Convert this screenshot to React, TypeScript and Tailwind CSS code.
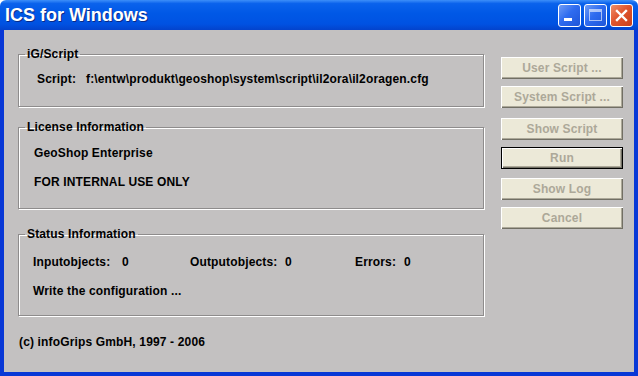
const groupCls =
  "m-0 border border-[#8e8c8c] p-0 shadow-[inset_1px_1px_0_#ffffff,1px_1px_0_#ffffff]";
const legendCls = "ml-[6px] px-[2px] leading-[14px] text-black";

function TitleButton({ kind }: { kind: "min" | "max" | "close" }) {
  const isClose = kind === "close";
  return (
    <div
      className={
        "flex h-[23px] w-[23px] items-center justify-center rounded-[3px] border border-white " +
        (isClose
          ? "bg-[linear-gradient(135deg,#f0906a_0%,#e0552e_45%,#c8401c_100%)]"
          : "bg-[linear-gradient(135deg,#6f9cf5_0%,#2f6cf0_45%,#1e55d8_100%)]")
      }
    >
      {kind === "min" && <div className="mt-[9px] ml-[-4px] h-[3px] w-[8px] bg-white" />}
      {kind === "max" && (
        <div className="h-[12px] w-[13px] border border-white border-t-[3px] opacity-60" />
      )}
      {isClose && (
        <svg width="13" height="13" viewBox="0 0 13 13">
          <path d="M2 2 L11 11 M11 2 L2 11" stroke="#fff" strokeWidth="2.4" strokeLinecap="square" />
        </svg>
      )}
    </div>
  );
}

function Btn({ label, def, className }: { label: string; def?: boolean; className?: string }) {
  return (
    <div
      className={
        "flex h-[22px] w-[122px] items-center justify-center bg-[#ece9d8] text-[#aca899] " +
        (def
          ? "border border-black shadow-[inset_1px_1px_0_#ffffff,inset_-1px_-1px_0_#716f64,inset_-2px_-2px_0_#aca899]"
          : "shadow-[inset_1px_1px_0_#ffffff,inset_-1px_-1px_0_#716f64,inset_-2px_-2px_0_#aca899]") +
        " " +
        (className ?? "")
      }
    >
      {label}
    </div>
  );
}

export default function App() {
  return (
    <div className="flex h-[376px] w-[638px] flex-col font-['Liberation_Sans',Arial,sans-serif] text-[12px] font-bold tracking-[0.15px]">
      {/* title bar */}
      <div className="flex h-[30px] items-center justify-between rounded-t-[6px] bg-[linear-gradient(to_bottom,#3d8ff9_0%,#0a62ec_12%,#0058e6_45%,#0052e2_80%,#0343cc_100%)] pl-[5px] pr-[5px]">
        <span className="text-[18px] leading-none tracking-normal text-white [text-shadow:1px_1px_0_#0b2a86]">
          ICS for Windows
        </span>
        <div className="flex gap-[3px]">
          <TitleButton kind="min" />
          <TitleButton kind="max" />
          <TitleButton kind="close" />
        </div>
      </div>

      {/* body */}
      <div className="flex flex-1 border-x-4 border-b-4 border-[#0838d6] bg-[#c3c1c1] pl-[14px] pt-[17px]">
        <div className="flex w-[466px] flex-col">
          <fieldset className={groupCls + " h-[60px]"}>
            <legend className={legendCls}>iG/Script</legend>
            <div className="flex pl-[18px] pt-[11px] leading-[14px]">
              <span className="w-[49px]">Script:</span>
              <span>f:\entw\produkt\geoshop\system\script\il2ora\il2oragen.cfg</span>
            </div>
          </fieldset>

          <fieldset className={groupCls + " mt-[13px] h-[89px]"}>
            <legend className={legendCls}>License Information</legend>
            <div className="flex flex-col gap-[15px] pl-[15px] pt-[12px] leading-[14px]">
              <span>GeoShop Enterprise</span>
              <span>FOR INTERNAL USE ONLY</span>
            </div>
          </fieldset>

          <fieldset className={groupCls + " mt-[18px] h-[89px]"}>
            <legend className={legendCls}>Status Information</legend>
            <div className="flex flex-col gap-[15px] pl-[14px] pt-[14px] leading-[14px]">
              <div className="flex">
                <span className="w-[89px]">Inputobjects:</span>
                <span className="w-[68px]">0</span>
                <span className="w-[95px]">Outputobjects:</span>
                <span className="w-[70px]">0</span>
                <span className="w-[49px]">Errors:</span>
                <span>0</span>
              </div>
              <span>Write the configuration ...</span>
            </div>
          </fieldset>

          <div className="mt-[19px] pl-[1px] leading-[14px]">(c) infoGrips GmbH, 1997 - 2006</div>
        </div>

        <div className="ml-[17px] flex flex-col pt-[10px]">
          <Btn label="User Script ..." />
          <Btn label="System Script ..." className="mt-[7px]" />
          <Btn label="Show Script" className="mt-[10px]" />
          <Btn label="Run" def className="mt-[7px]" />
          <Btn label="Show Log" className="mt-[9px]" />
          <Btn label="Cancel" className="mt-[7px]" />
        </div>
      </div>
    </div>
  );
}
